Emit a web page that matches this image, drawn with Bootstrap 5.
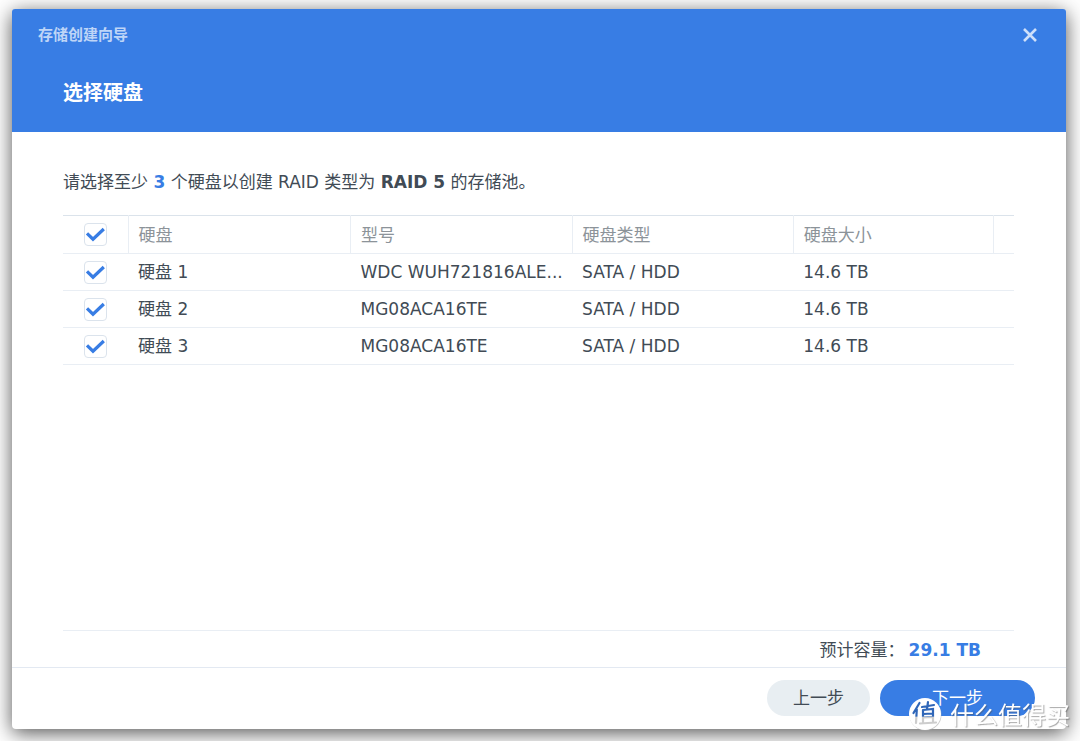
<!DOCTYPE html>
<html lang="zh-CN">
<head>
<meta charset="utf-8">
<meta name="viewport" content="width=device-width, initial-scale=1">
<title>存储创建向导</title>
<link href="https://cdn.jsdelivr.net/npm/bootstrap@5.3.0/dist/css/bootstrap.min.css" rel="stylesheet">
<style>
  :root { --brand: #387de4; --ink: #414b55; --rule: #e9eef4; }
  body {
    font-family: Verdana, "DejaVu Sans", "Noto Sans CJK SC", sans-serif;
    font-size: 17px; line-height: 24px; color: var(--ink);
    padding: 9px 14px 12px 12px; background: #fff;
  }
  .wizard { border-radius: 4px; box-shadow: 0 4px 20px rgba(0,0,0,.68); }
  .wizard-head { background: var(--brand); border-radius: 3px 3px 0 0; padding: 14px 26px 17px; }
  .wizard-name { font-size: 15px; color: #bed5f7; }
  .wizard-title { font-size: 20px; line-height: 28px; padding: 8px 25px; }
  .close-btn { width: 20px; height: 20px; }
  .wizard-body { padding: 38px 52px 0 51px; }
  .intro { margin-bottom: 21px; }
  .accent { color: var(--brand); }
  .disks { table-layout: fixed; border-top: 1px solid #dbe3eb; }
  .disks th, .disks td { height: 37px; padding: 0 10px; border-bottom: 1px solid var(--rule); }
  .disks th { height: 38px; font-weight: 400; color: #8c9399; }
  .disks th + th, .disks td + th { border-left: 1px solid var(--rule); }
  .col-tick { width: 65px; } .col-disk { width: 23.4%; } .col-model { width: 23.3%; }
  .col-size { width: 21%; } .col-gutter { width: 21px; }
  .form-check-input.tick {
    width: 23px; height: 23px; margin: 0; border: 1px solid #dbe3ec; border-radius: 4px; background-color: #fff;
  }
  .tick:checked {
    border-color: #dbe3ec; background-color: #fff; background-size: 21px 21px;
    background-image: url("data:image/svg+xml,%3csvg xmlns='http://www.w3.org/2000/svg' viewBox='0 0 21 21'%3e%3cpath fill='none' stroke='%23387de4' stroke-width='3.2' stroke-linecap='butt' d='M2 9.300 8 15.200 18.800 5'/%3e%3c/svg%3e");
  }
  .estimate { border-top: 1px solid var(--rule); height: 37px; padding: 2px 33px 0 0; }
  .wizard-foot { border-top: 1px solid #e3e9f2; padding: 12px 31px 13px; gap: 10px; }
  .pill { height: 36px; border: 0; padding: 0; border-radius: 18px; font-size: 17px; line-height: 36px; color: var(--ink); }
  .pill-back { width: 103px; background: #e8eef2; }
  .pill-next { width: 155px; background: var(--brand); color: #fff; }
  .site-mark { right: 10px; bottom: 10px; gap: 8px; pointer-events: none; font-family: "Noto Sans CJK SC", sans-serif; }
  .site-mark span { font-size: 24px; line-height: 34px; color: #fff; text-shadow: 1px 1px 1px rgba(80,80,80,.5); }
</style>
</head>
<body class="vh-100 d-flex">
<main class="wizard bg-white flex-grow-1 d-flex flex-column">
  <header class="wizard-head">
    <div class="d-flex justify-content-between align-items-center mb-4">
      <span class="wizard-name fw-bold">存储创建向导</span>
      <button type="button" class="close-btn btn p-0 border-0 d-flex" aria-label="关闭">
        <svg width="20" height="20" viewBox="0 0 20 20" fill="none" stroke="#cfe0fa" stroke-width="2.6" aria-hidden="true"><path d="M4 4 16 16M16 4 4 16"/></svg>
      </button>
    </div>
    <h1 class="wizard-title fw-bold text-white m-0">选择硬盘</h1>
  </header>
  <section class="wizard-body flex-grow-1 d-flex flex-column">
    <p class="intro">请选择至少 <b class="accent">3</b> 个硬盘以创建 RAID 类型为 <b>RAID 5</b> 的存储池。</p>
    <table class="disks w-100 align-middle">
      <colgroup><col class="col-tick"><col class="col-disk"><col class="col-model"><col><col class="col-size"><col class="col-gutter"></colgroup>
      <thead>
        <tr><td><div class="d-flex justify-content-center"><input class="form-check-input tick" type="checkbox" checked aria-label="全选"></div></td><th scope="col">硬盘</th><th scope="col">型号</th><th scope="col">硬盘类型</th><th scope="col">硬盘大小</th><th class="p-0"></th></tr>
      </thead>
      <tbody>
        <tr><td><div class="d-flex justify-content-center"><input class="form-check-input tick" type="checkbox" checked aria-labelledby="d1"></div></td><td id="d1">硬盘 1</td><td class="text-nowrap">WDC WUH721816ALE...</td><td>SATA / HDD</td><td>14.6 TB</td><td class="p-0"></td></tr>
        <tr><td><div class="d-flex justify-content-center"><input class="form-check-input tick" type="checkbox" checked aria-labelledby="d2"></div></td><td id="d2">硬盘 2</td><td>MG08ACA16TE</td><td>SATA / HDD</td><td>14.6 TB</td><td class="p-0"></td></tr>
        <tr><td><div class="d-flex justify-content-center"><input class="form-check-input tick" type="checkbox" checked aria-labelledby="d3"></div></td><td id="d3">硬盘 3</td><td>MG08ACA16TE</td><td>SATA / HDD</td><td>14.6 TB</td><td class="p-0"></td></tr>
      </tbody>
    </table>
    <div class="estimate mt-auto d-flex justify-content-end align-items-center">
      <span>预计容量：</span><b class="accent ms-1">29.1 TB</b>
    </div>
  </section>
  <footer class="wizard-foot d-flex justify-content-end">
    <button type="button" class="btn pill pill-back">上一步</button>
    <button type="button" class="btn pill pill-next">下一步</button>
  </footer>
</main>
<div class="site-mark position-fixed d-flex align-items-center">
  <svg width="34" height="34" viewBox="0 0 34 34" aria-hidden="true">
    <defs><linearGradient id="ink" gradientUnits="userSpaceOnUse" x1="0" y1="0" x2="0" y2="34"><stop offset=".56" stop-color="#2f66b8"/><stop offset=".6" stop-color="#cdcdcd"/></linearGradient></defs>
    <circle cx="17.500" cy="17.800" r="16" fill="#a8a8a8" opacity=".6"/><circle cx="17" cy="17" r="16" fill="#fff"/>
    <path fill="none" stroke="url(#ink)" stroke-width="2.2" stroke-linecap="round" d="M11.500 6 5.500 16M8.800 12.500 8 26M14 10 26 8M20 5 19 12M15 13 15 24.500M15 13 25 12 25 24M15.500 17 24 16.500M15.500 20.500 24 20M12 26.500 28 25.500"/>
  </svg>
  <span>什么值得买</span>
</div>
<script src="https://cdn.jsdelivr.net/npm/bootstrap@5.3.0/dist/js/bootstrap.bundle.min.js"></script>
</body>
</html>
